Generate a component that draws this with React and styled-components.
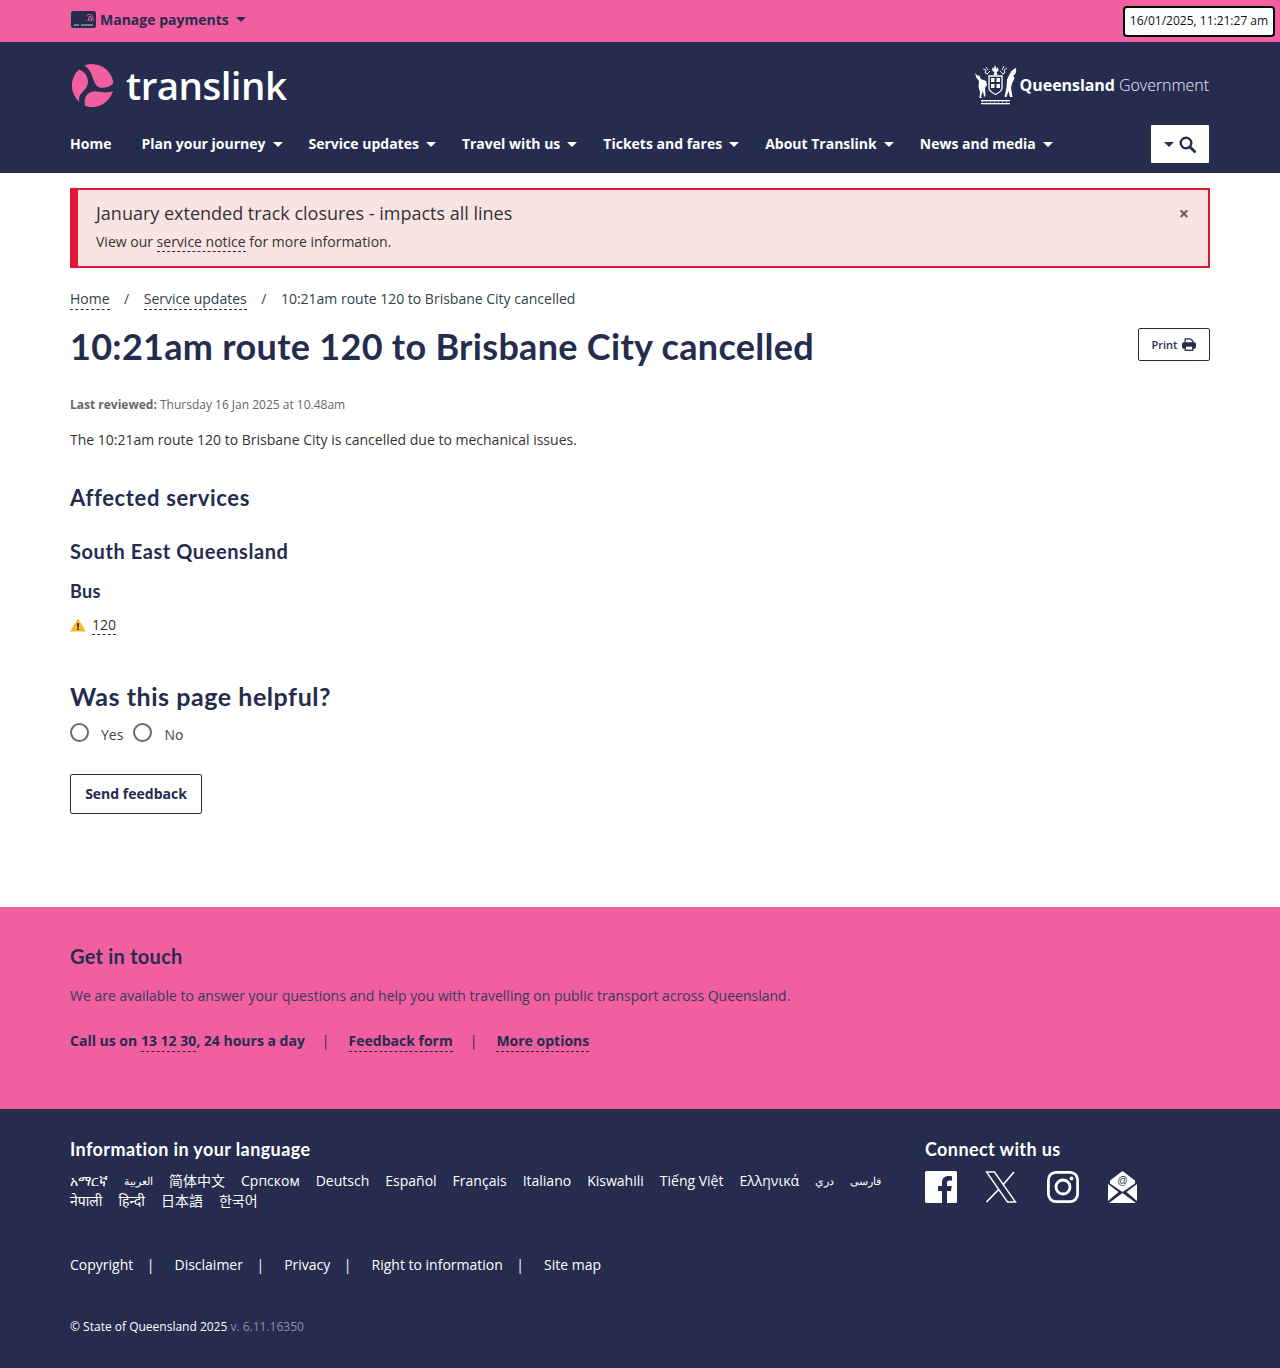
import React from 'react';
import styled, { createGlobalStyle } from 'styled-components';

const navy = '#252c4e';
const pink = '#f15fa0';
const body = '"Open Sans", "Noto Sans", "Noto Sans CJK SC", sans-serif';
const head = 'Lato, "Noto Sans", sans-serif';

const Global = createGlobalStyle`
  html, body { margin: 0; padding: 0; background: #fff; }
  body { font-family: ${body}; color: ${navy}; font-size: 14px; }
  * { box-sizing: border-box; }
`;

const Page = styled.div`width: 1280px; height: 1368px; display: flex; flex-direction: column;`;

const TopBar = styled.div`
  height: 42px; background: ${pink}; display: flex; align-items: flex-start;
  justify-content: space-between; padding: 0 5px 0 71px;
`;
const Manage = styled.div`
  display: flex; align-items: center; gap: 4px; height: 38px; font-weight: 700; font-size: 14px; color: ${navy};
`;
const Clock = styled.div`
  width: 152px; height: 31px; margin-top: 6px; background: #fff; color: #111; border: 2px solid #000;
  border-radius: 4px; font-size: 12px; display: flex; align-items: center; justify-content: center;
  white-space: nowrap; padding-bottom: 2px;
`;
const Caret = styled.span`
  display: inline-block; width: 0; height: 0;
  border-left: 5px solid transparent; border-right: 5px solid transparent;
  border-top: 5px solid ${p => p.$color || '#fff'}; margin-left: ${p => p.$gap ?? 7}px;
`;

const Header = styled.header`
  height: 131px; background: ${navy}; padding: 0 71px 0 70px; display: flex; flex-direction: column;
`;
const BrandRow = styled.div`
  height: 83px; display: flex; align-items: center; justify-content: space-between; padding-top: 3px;
`;
const Brand = styled.div`display: flex; align-items: center; gap: 12px; margin-left: 1px;`;
const BrandName = styled.span`
  font-family: "Open Sans", sans-serif; font-weight: 600; font-size: 38.5px; line-height: 44px; color: #fff;
  letter-spacing: -0.55px;
`;
const Gov = styled.div`display: flex; align-items: center; color: #fff; gap: 3px;`;
const GovText = styled.span`font-size: 16px; letter-spacing: -0.05px; white-space: nowrap; font-weight: 300; color: #eef;`;
const GovBold = styled.b`font-weight: 700; color: #fff;`;

const NavRow = styled.nav`height: 48px; display: flex; align-items: flex-start; justify-content: space-between;`;
const NavList = styled.div`display: flex; gap: 26px; padding-top: 9px;`;
const NavItem = styled.a`
  display: flex; align-items: center; color: #fff; font-weight: 700; font-size: 14px; line-height: 20px; white-space: nowrap;
  margin-right: ${p => (p.$home ? 4 : 0)}px;
`;
const SearchBtn = styled.button`
  width: 58px; height: 38px; background: #fff; border: 0; border-radius: 1px; padding: 0; display: flex; align-items: center;
  justify-content: center; gap: 5px;
`;

const Main = styled.main`height: 734px; padding: 15px 70px 0;`;
const Alert = styled.div`
  height: 80px; background: #f9e3e3; border: 2px solid #e31837; border-left-width: 8px;
  padding: 10px 18px 0 18px; position: relative;
`;
const AlertTitle = styled.div`font-size: 18px; line-height: 26px; color: #333;`;
const AlertText = styled.div`font-size: 14px; line-height: 20px; margin-top: 6px; color: #333;`;
const Close = styled.span`
  position: absolute; right: 19px; top: 13px; font-size: 18px; line-height: 20px; font-weight: 700; color: #6b5a5a;
`;
const Dashed = styled.a`
  color: inherit; border-bottom: 1px dashed ${navy};
`;
const Crumbs = styled.div`
  display: flex; align-items: baseline; margin-top: 21px; font-size: 14px; line-height: 20px; color: #333e48; height: 20px;
`;
const Sep = styled.span`margin: 0 14.5px; color: #444;`;
const TitleRow = styled.div`
  display: flex; justify-content: space-between; align-items: flex-start; margin-top: 13px;
`;
const H1 = styled.h1`
  margin: 0; font-family: ${head}; font-size: 36px; line-height: 48px; font-weight: 700; color: ${navy}; letter-spacing: 0.3px;
`;
const PrintBtn = styled.button`
  margin-top: 6px; width: 72px; height: 33px; background: #fff; border: 1px solid ${navy}; border-radius: 2px;
  font-family: ${body}; font-weight: 600; font-size: 11px; color: ${navy}; display: flex; align-items: center;
  justify-content: center; gap: 5px; padding: 0;
`;
const Reviewed = styled.div`margin-top: 26px; font-size: 12px; line-height: 18px; color: #666;`;
const ReviewedLabel = styled.b`font-weight: 700;`;
const Para = styled.p`margin: 16px 0 0; font-size: 14px; line-height: 20px; color: #333;`;
const H2 = styled.h2`
  margin: ${p => p.$top}px 0 0; font-family: ${head}; font-size: ${p => p.$size}px; line-height: ${p => p.$line}px;
  font-weight: 700; color: ${navy}; letter-spacing: ${p => p.$ls || 0}px;
`;
const RouteRow = styled.div`display: flex; align-items: center; gap: 6px; margin-top: 12px; height: 20px; color: #333;`;
const RadioRow = styled.div`display: flex; align-items: center; margin-top: 10px; height: 24px; color: #444; font-size: 14px;`;
const Radio = styled.span`
  width: 19px; height: 19px; border-radius: 50%; border: 2px solid #6c6c6c; background: #fff; margin-top: -3px;
  margin-left: ${p => p.$gap || 0}px; margin-right: 12px;
`;
const SendBtn = styled.button`
  display: block; margin-top: 28px; width: 132px; height: 40px; background: #fff; border: 1px solid ${navy}; border-radius: 2px;
  font-family: ${body}; font-weight: 700; font-size: 14px; color: ${navy}; padding: 0 0 2px;
`;

const Touch = styled.section`height: 202px; background: ${pink}; padding: 36px 70px 0; color: ${navy};`;
const TouchText = styled.p`margin: 17px 0 0; font-size: 14px; line-height: 20px; color: #333a5c;`;
const TouchLinks = styled.div`display: flex; align-items: baseline; margin-top: 25px; font-weight: 700; font-size: 14px; line-height: 20px;`;
const Bar = styled.span`margin: 0 19px 0 17px; font-weight: 400;`;

const Footer = styled.footer`flex: 1; background: ${navy}; color: #fff; padding: 28px 70px 0;`;
const FootTop = styled.div`display: flex; justify-content: space-between; height: 118px;`;
const LangCol = styled.div`width: 830px;`;
const SocialCol = styled.div`width: 285px;`;
const FootHead = styled.h3`margin: 0; font-family: ${head}; font-weight: 700; font-size: 18px; line-height: 24px; color: #fff; letter-spacing: 0.4px;`;
const Langs = styled.div`display: flex; flex-wrap: wrap; column-gap: 16px; margin-top: 10px; font-size: 14px; line-height: 20px;`;
const Lang = styled.span`font-size: ${p => (p.$small ? 11 : 14)}px;`;
const Socials = styled.div`display: grid; grid-template-columns: 60px 62px 61px auto; margin-top: 10px; align-items: center;`;
const LegalRow = styled.div`display: flex; font-size: 14px; line-height: 20px;`;
const LegalSep = styled.span`margin: 0 20px 0 13.5px;`;
const Copy = styled.div`margin-top: 42px; font-size: 12px; line-height: 20px;`;
const Version = styled.span`color: #8d90a3;`;

const Logo = () => (
  <svg width="43" height="43" viewBox="0 0 43 43" fill={pink}>
    <path d="M13.500 1.500A21.500 21.500 0 0 1 42.500 19C38 24 30 25 26.500 22.500 21 18 23 8 13.500 1.500Z" />
    <path d="M8 5.500A21.500 21.500 0 0 0 8.500 38C6.500 32 11 29 15 24 19 18 17 9 8 5.500Z" />
    <path d="M14 41.700A21.500 21.500 0 0 0 42 27C36 29.500 30 28 26 27.500 19 26.500 12 31 14 41.700Z" />
  </svg>
);
const Crest = () => (
  <svg width="43" height="42" viewBox="0 0 43 42" fill="#fff">
    <path d="M18 3l1.500 2L21 1l1.500 4L24 3l.5 4-2 1 1 3h-4l1-3-2-1z" />
    <path d="M9 5l3 1-1 3 3 1M12 3l2 3M33 4l-3 2 1 3-3 1M30 2l-2 4M16 7l-3 3M26 7l3 3" stroke="#fff" strokeWidth=".9" fill="none" />
    <path d="M15 12h13v12c0 3-3.500 5-6.500 6.500C18.500 29 15 27 15 24z" fill="none" stroke="#fff" strokeWidth="1.300" />
    <path d="M17 14h3.500v4H17zM22.500 14H26v4h-3.500zM17 20h3.500v4H17zM22.500 20H26v4h-3.500z" />
    <path d="M1 9l3 3 1-1 2 4 5 2 1 4-2 3 .5 8.500H10L9 27l-2 5.500 1 1.500H5.500L6 28l-1.500-5L5 17 2.500 14z" />
    <path d="M42 4c.8 4-.8 6.500-2.500 7.500l1 3-2.500 5-1 4 1.500 9.500h-2.500l-1.500-6-2 6h-2l2-9.500 .5-8 2.500-5c1.500-3.500 3.500-5.500 6.500-6.500z" />
    <rect x="7" y="36" width="29" height="1.300" /><rect x="7" y="39" width="29" height="1.300" />
    <path d="M8 38h1M12 38h1M16 38h1M20 38h1M24 38h1M28 38h1M32 38h1" stroke="#fff" strokeWidth=".8" />
  </svg>
);
const CardIcon = () => (
  <svg width="25" height="17" viewBox="0 0 25 17">
    <rect width="25" height="17" rx="2.500" fill={navy} />
    <path d="M3 14h5M10 14h12" stroke="#c7c8d3" strokeWidth="1" />
    <path d="M15.500 10V9M17.500 10V7a1.500 1.500 0 0 1 3 0v3M19 10V7.500M22 10V6.500a3.500 3.500 0 0 0-6.500-1.500" stroke={pink} strokeWidth=".9" fill="none" />
  </svg>
);
const SearchIcon = () => (
  <svg width="17" height="17" viewBox="0 0 17 17" fill="none" stroke={navy} strokeWidth="2.400">
    <circle cx="7" cy="7" r="5.300" /><path d="M10.800 10.800L15.600 15.600" strokeLinecap="round" strokeWidth="2.800" />
  </svg>
);
const PrintIcon = () => (
  <svg width="14" height="13" viewBox="0 0 14 13" fill="none" stroke={navy} strokeWidth="1.300">
    <path d="M3.200 5V.8h5.300l2.300 2.200V5" /><rect x=".7" y="5" width="12.600" height="5" rx="1" fill={navy} />
    <rect x="3.200" y="8" width="7.600" height="4.300" fill="#fff" />
  </svg>
);
const Warn = () => (
  <svg width="16" height="14" viewBox="0 0 16 14">
    <path d="M8 0.500L16 13.500H0z" fill="#fdb92e" />
    <rect x="7.200" y="5" width="1.600" height="4.500" fill="#222" /><rect x="7.200" y="10.400" width="1.600" height="1.600" fill="#222" />
  </svg>
);
const Fb = () => (
  <svg width="32" height="32" viewBox="0 0 32 32">
    <path d="M1.500 0h29A1.500 1.500 0 0 1 32 1.500v29a1.500 1.500 0 0 1-1.500 1.500H22V20h4l.7-5H22v-3c0-1.500.6-2.400 2.500-2.400H27V5.200C26.400 5.100 25 5 23.500 5 19.800 5 17 7.200 17 11.500V15h-4v5h4v12H1.500A1.500 1.500 0 0 1 0 30.500v-29A1.500 1.500 0 0 1 1.500 0z" fill="#fff" />
  </svg>
);
const XIcon = () => (
  <svg width="32" height="32" viewBox="0 0 32 32" fill="none" stroke="#fff" strokeWidth="1.400">
    <path d="M1.500 1h8l21 30h-8z" /><path d="M29 1L18 13.700M13.500 18.600L1.500 31" strokeWidth="1.600" />
  </svg>
);
const Insta = () => (
  <svg width="32" height="32" viewBox="0 0 32 32" fill="none" stroke="#fff" strokeWidth="2.800">
    <rect x="1.400" y="1.400" width="29.200" height="29.200" rx="7.500" />
    <circle cx="16" cy="16" r="7" /><circle cx="24.500" cy="7.500" r="1.900" fill="#fff" stroke="none" />
  </svg>
);
const Mail = () => (
  <svg width="29" height="32" viewBox="0 0 29 32" fill="#fff">
    <path d="M14.500 0L27 9.500V12.500L14.500 21 2 12.500V9.500z" />
    <path d="M0 13l10.500 8L0 30zM29 13L18.500 21 29 30zM1 32l13.500-10L28 32z" />
    <text x="14.500" y="13" textAnchor="middle" fontSize="10" fontFamily="Liberation Sans" fill={navy}>@</text>
  </svg>
);

const nav = ['Plan your journey', 'Service updates', 'Travel with us', 'Tickets and fares', 'About Translink', 'News and media'];
const langs = ['አማርኛ', 'العربية', '简体中文', 'Српском', 'Deutsch', 'Español', 'Français', 'Italiano', 'Kiswahili', 'Tiếng Việt', 'Ελληνικά', 'دري', 'فارسی', 'नेपाली', 'हिन्दी', '日本語', '한국어'];
const rtl = ['العربية', 'دري', 'فارسی'];

export default function App() {
  return (
    <Page>
      <Global />
      <TopBar>
        <Manage><CardIcon />Manage payments<Caret $color={navy} $gap={3} /></Manage>
        <Clock>16/01/2025, 11:21:27 am</Clock>
      </TopBar>
      <Header>
        <BrandRow>
          <Brand><Logo /><BrandName>translink</BrandName></Brand>
          <Gov><Crest /><GovText><GovBold>Queensland</GovBold> Government</GovText></Gov>
        </BrandRow>
        <NavRow>
          <NavList>
            <NavItem $home>Home</NavItem>
            {nav.map(n => <NavItem key={n}>{n}<Caret /></NavItem>)}
          </NavList>
          <SearchBtn><Caret $color={navy} $gap={0} /><SearchIcon /></SearchBtn>
        </NavRow>
      </Header>
      <Main>
        <Alert>
          <AlertTitle>January extended track closures - impacts all lines</AlertTitle>
          <AlertText>View our <Dashed>service notice</Dashed> for more information.</AlertText>
          <Close>×</Close>
        </Alert>
        <Crumbs><Dashed>Home</Dashed><Sep>/</Sep><Dashed>Service updates</Dashed><Sep>/</Sep>10:21am route 120 to Brisbane City cancelled</Crumbs>
        <TitleRow>
          <H1>10:21am route 120 to Brisbane City cancelled</H1>
          <PrintBtn>Print <PrintIcon /></PrintBtn>
        </TitleRow>
        <Reviewed><ReviewedLabel>Last reviewed:</ReviewedLabel> Thursday 16 Jan 2025 at 10.48am</Reviewed>
        <Para>The 10:21am route 120 to Brisbane City is cancelled due to mechanical issues.</Para>
        <H2 $top={34} $size={22} $line={28} $ls={0.65}>Affected services</H2>
        <H2 $top={26} $size={20} $line={26} $ls={0.57}>South East Queensland</H2>
        <H2 $top={15} $size={18} $line={24} $ls={0.3}>Bus</H2>
        <RouteRow><Warn /><Dashed>120</Dashed></RouteRow>
        <H2 $top={45} $size={25} $line={32} $ls={0.55}>Was this page helpful?</H2>
        <RadioRow><Radio />Yes<Radio $gap={10} />No</RadioRow>
        <SendBtn>Send feedback</SendBtn>
      </Main>
      <Touch>
        <H2 $top={0} $size={20} $line={26} $ls={0.25}>Get in touch</H2>
        <TouchText>We are available to answer your questions and help you with travelling on public transport across Queensland.</TouchText>
        <TouchLinks>Call us on&nbsp;<Dashed>13 12 30</Dashed>, 24 hours a day<Bar>|</Bar><Dashed>Feedback form</Dashed><Bar>|</Bar><Dashed>More options</Dashed></TouchLinks>
      </Touch>
      <Footer>
        <FootTop>
          <LangCol>
            <FootHead>Information in your language</FootHead>
            <Langs>{langs.map(l => <Lang key={l} $small={rtl.includes(l)}>{l}</Lang>)}</Langs>
          </LangCol>
          <SocialCol>
            <FootHead>Connect with us</FootHead>
            <Socials><Fb /><XIcon /><Insta /><Mail /></Socials>
          </SocialCol>
        </FootTop>
        <LegalRow>Copyright<LegalSep>|</LegalSep>Disclaimer<LegalSep>|</LegalSep>Privacy<LegalSep>|</LegalSep>Right to information<LegalSep>|</LegalSep>Site map</LegalRow>
        <Copy>© State of Queensland 2025 <Version>v. 6.11.16350</Version></Copy>
      </Footer>
    </Page>
  );
}
